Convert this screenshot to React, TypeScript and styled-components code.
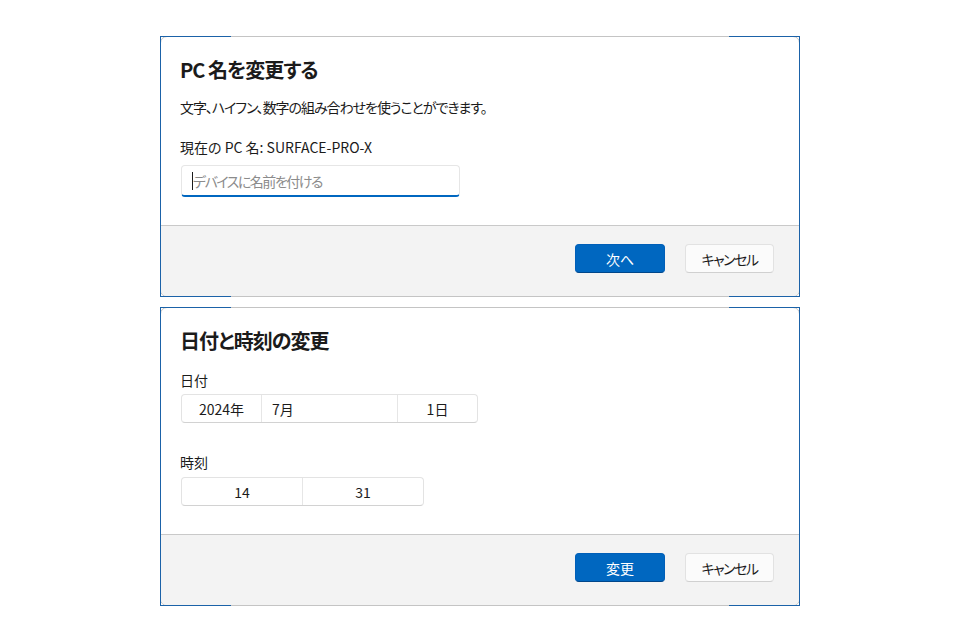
import React from "react";
import styled, { createGlobalStyle } from "styled-components";

const GlobalStyle = createGlobalStyle`
  html, body { margin: 0; padding: 0; background: #ffffff; }
  body {
    font-family: "Noto Sans CJK JP", "Noto Sans", sans-serif;
    color: #1b1b1b;
    -webkit-font-smoothing: antialiased;
  }
`;

const Page = styled.div`
  display: flex;
  flex-direction: column;
  align-items: center;
  gap: 10px;
  padding-top: 36px;
`;

const Frame = styled.div`
  position: relative;
  width: 640px;
  &::before {
    content: "";
    position: absolute;
    inset: 0;
    pointer-events: none;
    border-left: 1px solid #1b62a8;
    border-right: 1px solid #1b62a8;
    background:
      linear-gradient(#1b62a8, #1b62a8) left top / 70px 1px no-repeat,
      linear-gradient(#1b62a8, #1b62a8) right top / 70px 1px no-repeat,
      linear-gradient(#1b62a8, #1b62a8) left bottom / 70px 1px no-repeat,
      linear-gradient(#1b62a8, #1b62a8) right bottom / 70px 1px no-repeat;
  }
`;

const Panel = styled.div`
  border: 1px solid #c4c4c4;
  border-radius: 7px;
  overflow: hidden;
  background: #ffffff;
`;

const Body = styled.div<{ $bottom: number }>`
  display: flex;
  flex-direction: column;
  padding: 19px 20px ${(p) => p.$bottom}px;
`;

const Title = styled.h2`
  margin: 0 0 0 -1px;
  font-size: 20px;
  line-height: 28px;
  font-weight: 700;
  font-feature-settings: "palt";
  letter-spacing: -1px;
`;

const Text = styled.p<{ $top: number; $tight?: boolean }>`
  margin: ${(p) => p.$top}px 0 0 -1px;
  font-size: 14px;
  line-height: 20px;
  font-feature-settings: "palt";
  letter-spacing: ${(p) => (p.$tight ? "-1.05px" : "0")};
`;

const Input = styled.div`
  margin-top: 8px;
  width: 279px;
  height: 32px;
  box-sizing: border-box;
  border: 1px solid #e6e6e6;
  border-bottom: 2px solid #0067c0;
  border-radius: 4px;
  display: flex;
  align-items: center;
  padding-left: 10px;
  font-size: 14px;
  color: #8b8b8b;
  font-feature-settings: "palt";
  letter-spacing: -1.5px;
`;

const Caret = styled.span`
  display: inline-block;
  width: 1px;
  height: 18px;
  background: #1b1b1b;
`;

const Picker = styled.div<{ $top: number }>`
  margin-top: ${(p) => p.$top}px;
  display: flex;
  align-self: flex-start;
  height: 29px;
  box-sizing: border-box;
  border: 1px solid #e3e3e3;
  border-bottom-color: #d2d2d2;
  border-radius: 4px;
  background: #ffffff;
  font-size: 14px;
`;

const Segment = styled.div<{ $w: number; $left?: boolean }>`
  width: ${(p) => p.$w}px;
  display: flex;
  align-items: center;
  justify-content: ${(p) => (p.$left ? "flex-start" : "center")};
  padding-left: ${(p) => (p.$left ? 10 : 0)}px;
  box-sizing: border-box;
  & + & { border-left: 1px solid #e6e6e6; }
`;

const Footer = styled.div`
  display: flex;
  justify-content: flex-end;
  gap: 20px;
  background: #f3f3f3;
  border-top: 1px solid #c9c9c9;
  padding: 18px 25px 23px;
`;

const Button = styled.button<{ $primary?: boolean }>`
  width: ${(p) => (p.$primary ? 90 : 89)}px;
  height: 29px;
  border-radius: 4px;
  font-family: inherit;
  font-size: 14px;
  font-feature-settings: "palt";
  letter-spacing: ${(p) => (p.$primary ? "0" : "-1.5px")};
  border: 1px solid ${(p) => (p.$primary ? "#005fb8" : "#e2e2e2")};
  border-bottom-color: ${(p) => (p.$primary ? "#00468a" : "#d0d0d0")};
  background: ${(p) => (p.$primary ? "#0067c0" : "#fbfbfb")};
  color: ${(p) => (p.$primary ? "#ffffff" : "#1b1b1b")};
  padding: 0;
`;

export default function App() {
  return (
    <>
      <GlobalStyle />
      <Page>
        <Frame>
          <Panel>
            <Body $bottom={28}>
              <Title>PC 名を変更する</Title>
              <Text $top={13} $tight>文字、ハイフン、数字の組み合わせを使うことができます。</Text>
              <Text $top={20}>現在の PC 名: SURFACE-PRO-X</Text>
              <Input>
                <Caret />
                デバイスに名前を付ける
              </Input>
            </Body>
            <Footer>
              <Button $primary>次へ</Button>
              <Button>キャンセル</Button>
            </Footer>
          </Panel>
        </Frame>
        <Frame>
          <Panel>
            <Body $bottom={28}>
              <Title>日付と時刻の変更</Title>
              <Text $top={15}>日付</Text>
              <Picker $top={4}>
                <Segment $w={79}>2024年</Segment>
                <Segment $w={136} $left>7月</Segment>
                <Segment $w={80}>1日</Segment>
              </Picker>
              <Text $top={29}>時刻</Text>
              <Picker $top={5}>
                <Segment $w={120}>14</Segment>
                <Segment $w={121}>31</Segment>
              </Picker>
            </Body>
            <Footer>
              <Button $primary>変更</Button>
              <Button>キャンセル</Button>
            </Footer>
          </Panel>
        </Frame>
      </Page>
    </>
  );
}
